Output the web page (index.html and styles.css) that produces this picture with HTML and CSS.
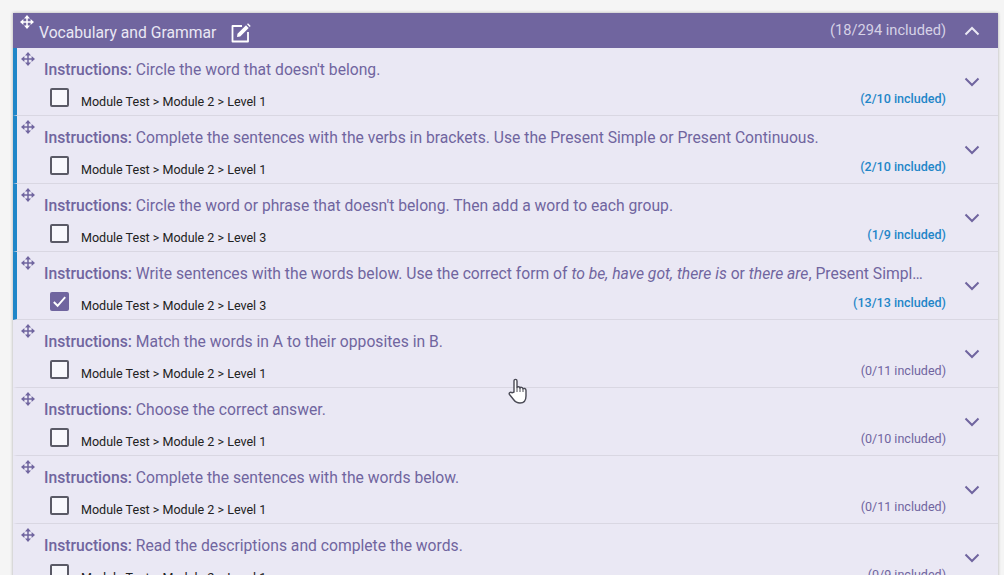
FILE: index.html
```html
<!DOCTYPE html>
<html lang="en">
<head>
<meta charset="utf-8">
<title>Vocabulary and Grammar</title>
<link rel="stylesheet" href="styles.css">
</head>
<body>
<svg class="defs" width="0" height="0" aria-hidden="true">
  <symbol id="move" viewBox="0 0 14 14">
    <path fill="currentColor" d="M7 0 10 3.400H4ZM7 14 4 10.600H10ZM0 7 3.400 4V10ZM14 7 10.600 10V4Z"/>
    <path fill="none" stroke="currentColor" stroke-width="1.500" d="M7 3V11M3 7H11"/>
  </symbol>
  <symbol id="down" viewBox="0 0 16 10">
    <path fill="none" stroke="currentColor" stroke-width="2" d="M1.500 1.500 8 8 14.500 1.500"/>
  </symbol>
</svg>
<section class="panel">
  <header class="panel-head">
    <svg class="head-move"><use href="#move"/></svg>
    <h2 class="panel-title">Vocabulary and Grammar</h2>
    <svg class="edit-icon" viewBox="0 0 20 20"><path fill="none" stroke="currentColor" stroke-width="1.800" stroke-linejoin="round" d="M11 3H1.500V18.500H17V9"/><path fill="currentColor" d="M6.500 10.800 15 2.300 17.700 5 9.200 13.500 6 14Z"/><path fill="currentColor" d="M16 1.300 17 .3 19.700 3 18.700 4Z"/></svg>
    <span class="panel-count">(18/294 included)</span>
    <svg class="head-chevron" viewBox="0 0 16 10"><path fill="none" stroke="currentColor" stroke-width="2" d="M1.500 8.500 8 2 14.500 8.500"/></svg>
  </header>

  <article class="row row-on">
    <svg class="move"><use href="#move"/></svg>
    <div class="row-main">
      <p class="instr"><b>Instructions:</b> Circle the word that doesn't belong.</p>
      <div class="meta"><span class="check"></span><span class="path">Module Test &gt; Module 2 &gt; Level 1</span><span class="count">(2/10 included)</span></div>
    </div>
    <svg class="chevron"><use href="#down"/></svg>
  </article>

  <article class="row row-on">
    <svg class="move"><use href="#move"/></svg>
    <div class="row-main">
      <p class="instr"><b>Instructions:</b> Complete the sentences with the verbs in brackets. Use the Present Simple or Present Continuous.</p>
      <div class="meta"><span class="check"></span><span class="path">Module Test &gt; Module 2 &gt; Level 1</span><span class="count">(2/10 included)</span></div>
    </div>
    <svg class="chevron"><use href="#down"/></svg>
  </article>

  <article class="row row-on">
    <svg class="move"><use href="#move"/></svg>
    <div class="row-main">
      <p class="instr"><b>Instructions:</b> Circle the word or phrase that doesn't belong. Then add a word to each group.</p>
      <div class="meta"><span class="check"></span><span class="path">Module Test &gt; Module 2 &gt; Level 3</span><span class="count">(1/9 included)</span></div>
    </div>
    <svg class="chevron"><use href="#down"/></svg>
  </article>

  <article class="row row-on">
    <svg class="move"><use href="#move"/></svg>
    <div class="row-main">
      <p class="instr"><b>Instructions:</b> Write sentences with the words below. Use the correct form of <i>to be, have got, there is</i> or <i>there are</i>, Present Simple or Present Continuous.</p>
      <div class="meta"><span class="check check-on"><svg viewBox="0 0 20 20"><path fill="none" stroke="#fff" stroke-width="2" d="M4 10.500 8 14.500 16 5.500"/></svg></span><span class="path">Module Test &gt; Module 2 &gt; Level 3</span><span class="count">(13/13 included)</span></div>
    </div>
    <svg class="chevron"><use href="#down"/></svg>
  </article>

  <article class="row">
    <svg class="move"><use href="#move"/></svg>
    <div class="row-main">
      <p class="instr"><b>Instructions:</b> Match the words in A to their opposites in B.</p>
      <div class="meta"><span class="check"></span><span class="path">Module Test &gt; Module 2 &gt; Level 1</span><span class="count">(0/11 included)</span></div>
    </div>
    <svg class="chevron"><use href="#down"/></svg>
  </article>

  <article class="row">
    <svg class="move"><use href="#move"/></svg>
    <div class="row-main">
      <p class="instr"><b>Instructions:</b> Choose the correct answer.</p>
      <div class="meta"><span class="check"></span><span class="path">Module Test &gt; Module 2 &gt; Level 1</span><span class="count">(0/10 included)</span></div>
    </div>
    <svg class="chevron"><use href="#down"/></svg>
  </article>

  <article class="row">
    <svg class="move"><use href="#move"/></svg>
    <div class="row-main">
      <p class="instr"><b>Instructions:</b> Complete the sentences with the words below.</p>
      <div class="meta"><span class="check"></span><span class="path">Module Test &gt; Module 2 &gt; Level 1</span><span class="count">(0/11 included)</span></div>
    </div>
    <svg class="chevron"><use href="#down"/></svg>
  </article>

  <article class="row">
    <svg class="move"><use href="#move"/></svg>
    <div class="row-main">
      <p class="instr"><b>Instructions:</b> Read the descriptions and complete the words.</p>
      <div class="meta"><span class="check"></span><span class="path">Module Test &gt; Module 2 &gt; Level 1</span><span class="count">(0/9 included)</span></div>
    </div>
    <svg class="chevron"><use href="#down"/></svg>
  </article>
</section>
<svg class="cursor" viewBox="0 0 20 26"><path fill="#fff" stroke="#4a4a55" stroke-width="1.400" stroke-linejoin="round" d="M6 14V3C6 .8 9 .8 9 3V9.500C9.500 8.500 11.500 8.500 12 10 12.500 9 14.500 9 15 10.800 15.800 10 18 10.300 18 12.500V18C18 22 16 25 12 25 8.500 25 7 23.500 5.500 21.500L1.500 16.500C.5 15 2.500 13.500 4 14.800Z"/><path fill="none" stroke="#4a4a55" stroke-width="1" d="M9 9.500V14M12 10V14M15 10.800V14"/></svg>
</body>
</html>
```

FILE: styles.css
```css
* {
  box-sizing: border-box;
}

html,
body {
  height: 100%;
}

body {
  margin: 0;
  padding: 13px 6px 0 13px;
  overflow: hidden;
  background: #f5f5f5;
  font-family: Roboto, "Liberation Sans", sans-serif;
  position: relative;
}

.defs {
  position: absolute;
}

.panel {
  background: #eae8f4;
  box-shadow: 0 0 3px rgba(0, 0, 0, 0.3);
}

.panel-head {
  height: 35px;
  display: flex;
  align-items: center;
  background: #70659f;
  color: #eae8f4;
}

.head-move {
  width: 14px;
  height: 14px;
  margin: -18px 0 0 7px;
  flex: none;
  color: #fff;
}

.panel-title {
  margin: 4px 0 0 5px;
  font-size: 15.680px;
  font-weight: 400;
  line-height: 20px;
}

.edit-icon {
  width: 20px;
  height: 20px;
  margin: 5px 0 0 15px;
  flex: none;
  color: #fff;
}

.panel-count {
  margin-left: auto;
  margin-top: -2px;
  font-size: 14.630px;
  color: #d6d2e6;
}

.head-chevron {
  width: 16px;
  height: 10px;
  margin: 0 18px 0 18px;
  flex: none;
  color: #eae8f4;
}

.row {
  height: 68px;
  display: flex;
  align-items: flex-start;
  padding-left: 4px;
  border-left: 4px solid transparent;
  border-bottom: 1px solid #d9d7e2;
  color: #70659f;
}

.row-on {
  border-left-color: #1f86c8;
}

.move {
  width: 14px;
  height: 14px;
  margin-top: 4px;
  flex: none;
  color: #70659f;
}

.row-main {
  flex: 1;
  min-width: 0;
  margin-left: 9px;
  padding-top: 11px;
}

.instr {
  margin: 0;
  padding-right: 20px;
  font-size: 15.680px;
  line-height: 22px;
  white-space: nowrap;
  overflow: hidden;
  text-overflow: ellipsis;
}

.instr b {
  font-weight: 500;
}

.meta {
  display: flex;
  align-items: flex-start;
  margin-top: 7px;
}

.check {
  width: 19px;
  height: 19px;
  margin-left: 6px;
  flex: none;
  border: 2px solid #5a5a66;
  border-radius: 2px;
  background: #f8f8fc;
}

.check-on {
  border: 0;
  background: #70659f;
}

.check-on svg {
  display: block;
  width: 19px;
  height: 19px;
}

.path {
  margin: 6px 0 0 12px;
  font-size: 12.540px;
  line-height: 16px;
  color: #222;
}

.count {
  margin-left: auto;
  margin-top: 3px;
  font-size: 12.540px;
  line-height: 16px;
  color: #70659f;
}

.row-on .count {
  color: #1f86c8;
  font-weight: 500;
}

.chevron {
  width: 16px;
  height: 10px;
  margin: 29px 18px 0 18px;
  flex: none;
  color: #70659f;
}

.cursor {
  position: absolute;
  left: 508px;
  top: 378px;
  width: 20px;
  height: 26px;
}
```
